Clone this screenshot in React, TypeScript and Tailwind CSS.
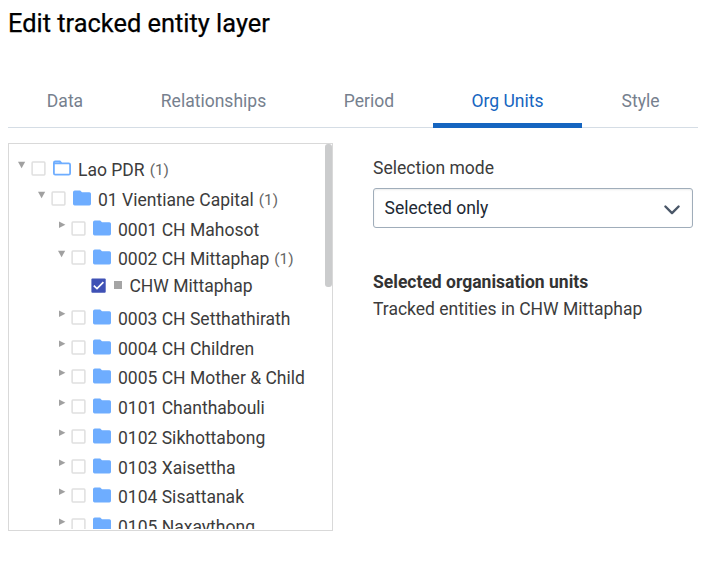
import React from "react";

type Unit = {
  name: string;
  level: number;
  count?: number;
  open?: boolean;
  root?: boolean;
};

const before: Unit[] = [
  { name: "Lao PDR", level: 0, count: 1, open: true, root: true },
  { name: "01 Vientiane Capital", level: 1, count: 1, open: true },
  { name: "0001 CH Mahosot", level: 2 },
  { name: "0002 CH Mittaphap", level: 2, count: 1, open: true },
];

const after: Unit[] = [
  "0003 CH Setthathirath",
  "0004 CH Children",
  "0005 CH Mother & Child",
  "0101 Chanthabouli",
  "0102 Sikhottabong",
  "0103 Xaisettha",
  "0104 Sisattanak",
  "0105 Naxaythong",
].map((name) => ({ name, level: 2 }));

const indents = ["pl-[9px]", "pl-[29px]", "pl-[49px]"];

function Folder({ outline }: { outline?: boolean }) {
  return (
    <svg className="ml-[7px] mt-[5px] h-[16px] w-[18px] shrink-0" viewBox="0 0 18 16">
      {outline ? (
        <path
          d="M0.9 13.2V2.8Q0.9 1.4 2.2 1.4H6.8L8.6 3.4H15.8Q17.1 3.4 17.1 4.7V13.2Q17.1 14.6 15.8 14.6H2.2Q0.9 14.6 0.9 13.2ZM1 3.4H8.6"
          fill="none"
          stroke="#6eadff"
          strokeWidth="1.8"
        />
      ) : (
        <path
          d="M0 2.2Q0 .4 1.8 .4H7.2L9 2.2H16.4Q18 2.2 18 3.8V13.8Q18 15.4 16.4 15.4H1.6Q0 15.4 0 13.8Z"
          fill="#6eadff"
        />
      )}
    </svg>
  );
}

function Row({ unit }: { unit: Unit }) {
  return (
    <div className={`flex h-[29.7px] items-start ${indents[unit.level]}`}>
      <svg className="mt-[6px] h-[8px] w-[8px] shrink-0" viewBox="0 0 8 8">
        <path d={unit.open ? "M0 0.8H7.2L3.6 7.2Z" : "M1 0.4V7L7.4 3.7Z"} fill="#a0a0a0" />
      </svg>
      <svg className="ml-[5px] mt-[6px] h-[15px] w-[15px] shrink-0" viewBox="0 0 15 15">
        <rect x="1.1" y="1.1" width="12.8" height="12.8" rx="0.8" fill="#fff" stroke="#dfdfdf" strokeWidth="1.5" />
      </svg>
      <Folder outline={unit.root} />
      <span className="ml-[7px] leading-[30px]">{unit.name}</span>
      {unit.count && (
        <span className="ml-[5px] text-[15.3px] leading-[31px] text-[#666]">({unit.count})</span>
      )}
    </div>
  );
}

export default function App() {
  return (
    <div className="h-[568px] w-[706px] overflow-hidden bg-white px-2 font-[Roboto,sans-serif] text-[17.53px] whitespace-nowrap text-[#3c3c3c]">
      <h1 className="pt-[7px] text-[25.4px] leading-[32px] text-black [-webkit-text-stroke:0.25px_black]">Edit tracked entity layer</h1>
      <nav className="mt-[35px] flex h-[54px] w-[690px] border-b border-[#d5dde5] leading-[54px] text-[#76808e]">
        <span className="w-[114px] text-center">Data</span>
        <span className="w-[183px] text-center">Relationships</span>
        <span className="w-[128px] text-center">Period</span>
        <span className="h-[54px] w-[149px] border-b-[5px] border-[#1565c0] text-center text-[#1565c0]">Org Units</span>
        <span className="w-[116px] pl-px text-center">Style</span>
      </nav>
      <main className="mt-[15px] flex">
        <section className="flex h-[388px] w-[325px] shrink-0 border border-[#d9d9d9]">
          <div className="h-[385px] min-w-0 flex-1 overflow-hidden pt-[11.2px]">
            {before.map((u) => (
              <Row key={u.name} unit={u} />
            ))}
            <div className="flex h-[30.15px] items-start pl-[82px]">
              <svg className="mt-[4px] h-[15px] w-[15px] shrink-0" viewBox="0 0 15 15">
                <rect x="0.4" y="0.4" width="14.3" height="14.3" rx="1" fill="#3f51b5" />
                <path d="M2.8 7.6L6 10.6L12.4 4.1" fill="none" stroke="#fff" strokeWidth="1.7" />
              </svg>
              <span className="ml-[8.4px] mt-[7px] h-[8px] w-[8px] shrink-0 bg-[#a5a5a5]" />
              <span className="ml-[7px] leading-[24px]">CHW Mittaphap</span>
            </div>
            {after.map((u) => (
              <Row key={u.name} unit={u} />
            ))}
          </div>
          <div className="h-[143px] w-[7px] shrink-0 rounded-[3px] bg-[#cbcccd]" />
        </section>
        <section className="ml-10 w-[320px]">
          <div className="h-[45px] leading-[50px]">Selection mode</div>
          <div className="flex h-[40px] items-center justify-between rounded-[3px] border border-[#a0adba] pr-[11px] pl-[10.5px] text-[#212934] shadow-[inset_0_1px_2px_rgba(48,54,60,0.1)]">
            <span className="leading-[26px] pb-[1px]">Selected only</span>
            <svg className="mt-[3px] h-[18px] w-[18px]" viewBox="0 0 18 18">
              <path d="M2.4 5.5L9 12.1L15.6 5.5" fill="none" stroke="#4a5768" strokeWidth="2.4" strokeLinecap="round" strokeLinejoin="round" />
            </svg>
          </div>
          <div className="mt-[41px] leading-[27px]">
            <h2 className="font-bold text-[#333]">Selected organisation units</h2>
            <p>Tracked entities in CHW Mittaphap</p>
          </div>
        </section>
      </main>
    </div>
  );
}
